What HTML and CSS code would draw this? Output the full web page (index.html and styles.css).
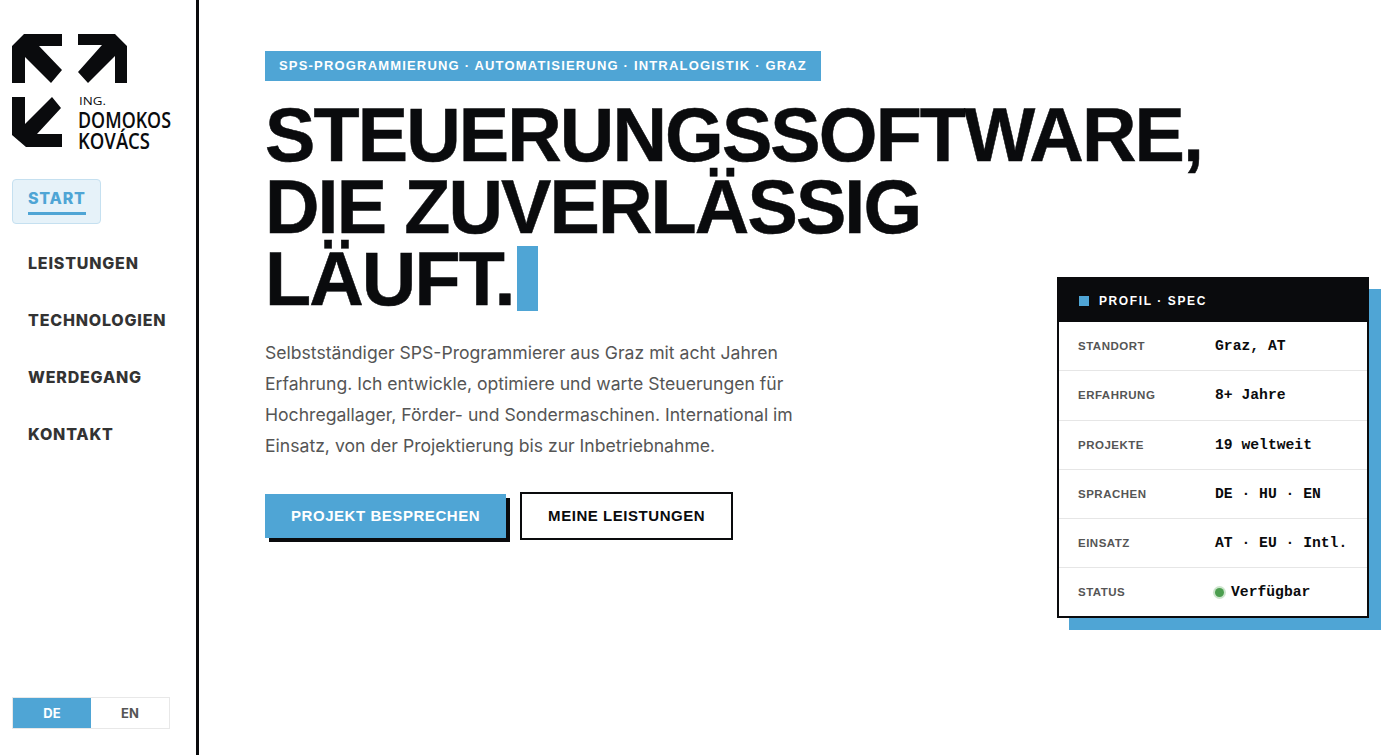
FILE: index.html
```html
<!DOCTYPE html>
<html lang="de">
<head>
  <meta charset="UTF-8" />
  <title>Ing. Domokos Kovács — SPS-Programmierung</title>
  <meta name="viewport" content="width=device-width, initial-scale=1.0" />
  <link rel="stylesheet" href="styles.css">
</head>

<body>
  <div class="layout">
    <aside class="sidebar">
      <svg class="logo" width="170" height="125" viewBox="0 0 170 125">
        <path d="M12 0H50V12H27L50 36L39 49L13 23V49H0V12Z" />
        <path d="M66 0H103L115 12V49H103V22L76 49L66 38L90 11H66Z" />
        <path d="M0 63H13V90L40 63L49 74L25 100H50V113H14L0 101Z" />
        <text class="logo-ing" x="67" y="71" textLength="27" lengthAdjust="spacingAndGlyphs">ING.</text>
        <text class="logo-name" x="66" y="94" textLength="93" lengthAdjust="spacingAndGlyphs">DOMOKOS</text>
        <text class="logo-name" x="66" y="115" textLength="72" lengthAdjust="spacingAndGlyphs">KOVÁCS</text>
      </svg>

      <nav class="nav">
        <a class="nav-item active" href="#"><span>START</span></a>
        <a class="nav-item" href="#"><span>LEISTUNGEN</span></a>
        <a class="nav-item" href="#"><span>TECHNOLOGIEN</span></a>
        <a class="nav-item" href="#"><span>WERDEGANG</span></a>
        <a class="nav-item" href="#"><span>KONTAKT</span></a>
      </nav>

      <div class="lang">
        <div class="lang-btn active">DE</div>
        <div class="lang-btn">EN</div>
      </div>
    </aside>

    <main class="hero">
      <div class="kicker">SPS-PROGRAMMIERUNG · AUTOMATISIERUNG · INTRALOGISTIK · GRAZ</div>
      <h1>STEUERUNGSSOFTWARE,<br />DIE ZUVERLÄSSIG<br />LÄUFT.<span class="cursor"></span></h1>
      <p class="lead">
        Selbstständiger SPS-Programmierer aus Graz mit acht Jahren<br />
        Erfahrung. Ich entwickle, optimiere und warte Steuerungen für<br />
        Hochregallager, Förder- und Sondermaschinen. International im<br />
        Einsatz, von der Projektierung bis zur Inbetriebnahme.
      </p>
      <div class="actions">
        <a class="btn btn-primary" href="#">PROJEKT BESPRECHEN</a>
        <a class="btn btn-outline" href="#">MEINE LEISTUNGEN</a>
      </div>

      <section class="spec">
        <div class="spec-head"><i></i>PROFIL · SPEC</div>
        <div class="spec-row"><span class="spec-key">STANDORT</span><span class="spec-val">Graz, AT</span></div>
        <div class="spec-row"><span class="spec-key">ERFAHRUNG</span><span class="spec-val">8+ Jahre</span></div>
        <div class="spec-row"><span class="spec-key">PROJEKTE</span><span class="spec-val">19 weltweit</span></div>
        <div class="spec-row"><span class="spec-key">SPRACHEN</span><span class="spec-val">DE · HU · EN</span></div>
        <div class="spec-row"><span class="spec-key">EINSATZ</span><span class="spec-val">AT · EU · Intl.</span></div>
        <div class="spec-row"><span class="spec-key">STATUS</span><span class="spec-val"><i class="dot"></i>Verfügbar</span></div>
      </section>
    </main>
  </div>
</body>
</html>
```

FILE: styles.css
```css
* {
  box-sizing: border-box;
}

body {
  font-family: Inter, "Liberation Sans", sans-serif;
  background: #fff;
  margin: 0;
  color: #0a0b0d;
}

a {
  text-decoration: none;
  color: inherit;
}

.layout {
  display: flex;
  height: 755px;
  overflow: hidden;
}

/* sidebar */
.sidebar {
  width: 199px;
  flex-shrink: 0;
  border-right: 3px solid #0a0b0d;
  padding: 34px 12px 26px;
  display: flex;
  flex-direction: column;
}

.logo {
  display: block;
  fill: #0a0b0d;
}

.logo-ing {
  font-family: "Open Sans", sans-serif;
  font-size: 10px;
}

.logo-name {
  font-family: "Open Sans", sans-serif;
  font-size: 21px;
  font-weight: 600;
}

.nav {
  margin-top: 20px;
  display: flex;
  flex-direction: column;
  align-items: flex-start;
  gap: 12px;
}

.nav-item {
  padding: 5px 15px;
  height: 45px;
  border: 1px solid transparent;
  border-radius: 4px;
  font-size: 16px;
  font-weight: 800;
  letter-spacing: 0.8px;
  color: #333;
  line-height: 26px;
}

.nav-item span {
  display: block;
}

.nav-item.active {
  color: #4fa5d5;
  background: #e6f2f9;
  border-color: #c5e0f0;
  margin-bottom: 8px;
  padding-right: 14px;
}

.nav-item.active span {
  border-bottom: 3px solid #4fa5d5;
  height: 30px;
}

.lang {
  margin-top: auto;
  display: flex;
  width: 158px;
  height: 32px;
  border: 1px solid #e8e8e8;
}

.lang-btn {
  flex: 1;
  text-align: center;
  font-size: 13px;
  font-weight: 700;
  line-height: 30px;
  color: #555;
}

.lang-btn.active {
  background: #4fa5d5;
  color: #fff;
}

/* hero */
.hero {
  position: relative;
  flex: 1;
  padding: 51px 0 0 66px;
}

.kicker {
  display: inline-block;
  background: #4fa5d5;
  color: #fff;
  font-family: "Liberation Sans", sans-serif;
  font-size: 13px;
  font-weight: 700;
  letter-spacing: 1.18px;
  line-height: 30px;
  padding: 0 14px;
}

h1 {
  font-family: "Liberation Sans", sans-serif;
  font-size: 75.5px;
  font-weight: 700;
  line-height: 72px;
  letter-spacing: -1.9px;
  -webkit-text-stroke: 0.5px #0a0b0d;
  margin: 18px 0 0;
}

.cursor {
  display: inline-block;
  width: 21px;
  height: 65px;
  background: #4fa5d5;
  margin-left: 3px;
  vertical-align: -6px;
}

.lead {
  font-size: 17.6px;
  line-height: 31px;
  color: #555;
  margin: 22px 0 0;
}

.actions {
  display: flex;
  align-items: center;
  gap: 14px;
  margin-top: 31px;
}

.btn {
  font-family: "Liberation Sans", sans-serif;
  font-size: 15px;
  font-weight: 700;
  letter-spacing: 0.55px;
}

.btn-primary {
  background: #4fa5d5;
  color: #fff;
  padding: 0 26px;
  line-height: 44px;
  box-shadow: 4px 4px 0 #0a0b0d;
}

.btn-outline {
  border: 2px solid #0a0b0d;
  padding: 0 26px;
  line-height: 44px;
}

/* spec card */
.spec {
  position: absolute;
  left: 858px;
  top: 277px;
  width: 312px;
  background: #fff;
  border: 2px solid #0a0b0d;
  box-shadow: 12px 12px 0 #4fa5d5;
}

.spec-head {
  display: flex;
  align-items: center;
  height: 43px;
  padding-left: 20px;
  background: #0a0b0d;
  color: #fff;
  font-family: "Liberation Sans", sans-serif;
  font-size: 12px;
  font-weight: 700;
  letter-spacing: 1.6px;
}

.spec-head i {
  width: 10px;
  height: 10px;
  margin-right: 10px;
  background: #4fa5d5;
}

.spec-row {
  display: flex;
  align-items: center;
  height: 49.3px;
  padding-left: 19px;
  border-bottom: 1px solid #e6e6e6;
}

.spec-row:last-child {
  height: 47.6px;
  border-bottom: none;
}

.spec-key {
  width: 137px;
  font-family: "Liberation Sans", sans-serif;
  font-size: 11.5px;
  font-weight: 700;
  letter-spacing: 0.5px;
  color: #555;
}

.spec-val {
  display: flex;
  align-items: center;
  font-family: "Liberation Mono", monospace;
  font-size: 14.7px;
  font-weight: 700;
  white-space: pre;
}

.dot {
  width: 9px;
  height: 9px;
  margin: 0 7px 0 0;
  border-radius: 50%;
  background: #4c9e4f;
  box-shadow: 0 0 0 2px #cde5cd;
}
```
